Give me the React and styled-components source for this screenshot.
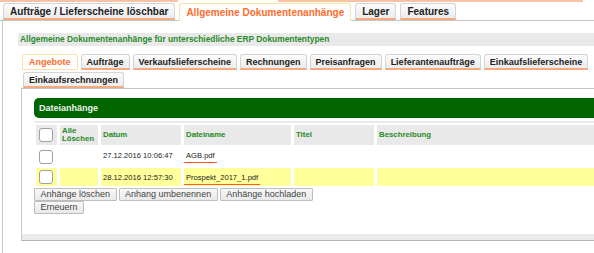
import React from 'react'
import styled, { createGlobalStyle, css } from 'styled-components'

const GlobalStyle = createGlobalStyle`
  html, body {
    margin: 0;
    padding: 0;
    background: #fff;
  }
  body {
    font-family: "Liberation Sans", Arial, sans-serif;
    width: 594px;
    height: 253px;
    overflow: hidden;
  }
`

const Page = styled.div`
  width: 594px;
  height: 253px;
  display: flex;
  flex-direction: column;
`

const CutRow = styled.div`
  display: flex;
  height: 2px;
`

const CutTab = styled.div`
  width: ${p => p.$w}px;
  margin-left: ${p => p.$ml || 0}px;
  border-bottom: 2px solid #f9c3a3;
`

const TopTabs = styled.div`
  display: flex;
  align-items: flex-end;
  gap: 4px;
  margin-top: 1px;
  padding-left: 3px;
  height: 17px;
  border-bottom: 1px solid #c4c4c4;
`

const tabBase = css`
  box-sizing: border-box;
  display: flex;
  align-items: center;
  white-space: nowrap;
  font-weight: bold;
  color: #222;
  border: 1px solid #d4d4d4;
  border-bottom: 2px solid #f5a97c;
  border-radius: 3px 3px 0 0;
  background: linear-gradient(#fcfcfc, #ececec);
`

const TopTab = styled.div`
  ${tabBase};
  height: 17px;
  padding: 0 6px;
  font-size: 10px;
  ${p => p.$active && css`
    height: 18px;
    margin-bottom: -1px;
    background: #fff;
    border-color: #fbe2a8;
    border-bottom: none;
    color: #ff6b2b;
  `}
`

const Outer = styled.div`
  flex: 1;
  margin-left: 2px;
  border-left: 1px solid #c8c8c8;
  padding: 12px 0 0 15px;
  display: flex;
  flex-direction: column;
`

const TitleBar = styled.div`
  height: 13px;
  line-height: 13px;
  background: #e9e9e9;
  color: #2a8a2a;
  font-weight: bold;
  font-size: 8.4px;
  padding-left: 2px;
  white-space: nowrap;
`

const InnerWrap = styled.div`
  margin: 8px 0 0 3px;
  width: 600px;
`

const InnerTabs = styled.div`
  display: flex;
  flex-direction: column;
  gap: 2px;
  padding-left: 1px;
  border-bottom: 1px solid #c4c4c4;
`

const TabLine = styled.div`
  display: flex;
  gap: 3px;
  padding-left: ${p => p.$pl || 0}px;
`

const InnerTab = styled.div`
  ${tabBase};
  height: 16px;
  padding: 0 5px;
  font-size: 9px;
  ${p => p.$active && css`
    padding: 0 6px;
    background: #fff;
    border-color: #fbe2a8;
    border-bottom: 1px solid #fbe2a8;
    color: #ff6b2b;
  `}
`

const Panel = styled.div`
  border-left: 1px solid #c8c8c8;
  padding: 9px 0 0 0;
  display: flex;
  flex-direction: column;
`

const PanelBody = styled.div`
  padding: 0 8px 20px 12px;
  display: flex;
  flex-direction: column;
`

const PanelFoot = styled.div`
  height: 6px;
  background: #ebebeb;
  border-bottom: 1px solid #b4b4b4;
`

const GreenHead = styled.div`
  height: 20px;
  line-height: 20px;
  background: #006400;
  border-radius: 5px;
  color: #eef3ee;
  font-weight: bold;
  font-size: 9px;
  padding-left: 5px;
`

const GreyRule = styled.div`
  height: 2px;
  margin: 3px 0 2px 1px;
  background: #e9e9e9;
`

const Grid = styled.div`
  display: grid;
  grid-template-columns: 21px 38px 80px 107px 80px 1fr;
  column-gap: 3px;
  row-gap: 1px;
  margin-left: 2px;
  font-size: 7.6px;
  color: #222;
`

const HeadCell = styled.div`
  height: 20px;
  background: #e9e9e9;
  color: #278a27;
  font-weight: bold;
  font-size: 7.8px;
  display: flex;
  align-items: center;
  padding-left: 2px;
  line-height: 8.5px;
`

const Cell = styled.div`
  height: ${p => p.$h}px;
  background: ${p => (p.$hl ? '#ffff9c' : '#fff')};
  padding: 5px 0 0 2px;
  box-sizing: border-box;
`

const CheckCell = styled.div`
  height: ${p => p.$h}px;
  background: ${p => (p.$hl ? '#ffff9c' : p.$head ? '#e9e9e9' : '#fff')};
  display: flex;
  align-items: center;
  padding-left: 3px;
`

const Box = styled.span`
  display: inline-block;
  width: 12px;
  height: 12px;
  border: 1px solid #a0a0a0;
  border-radius: 3px;
  background: #fff;
`

const FileName = styled.span`
  display: inline-block;
  padding: 0 2px 2px 2px;
  margin-left: -2px;
  border-bottom: 1px solid #ff5a22;
`

const Buttons = styled.div`
  display: flex;
  gap: 2px;
  margin-top: ${p => p.$mt || 0}px;
`

const Button = styled.button`
  font-family: "Liberation Sans", Arial, sans-serif;
  font-size: 9px;
  color: #444;
  height: 13px;
  line-height: 11px;
  padding: 0 5.5px;
  background: linear-gradient(#f8f8f8, #e9e9e9);
  border: 1px solid #bdbdbd;
  border-radius: 1px;
`

const rows = [
  { date: '27.12.2016 10:06:47', file: 'AGB.pdf', hl: false, h: 21 },
  { date: '28.12.2016 12:57:30', file: 'Prospekt_2017_1.pdf', hl: true, h: 18 },
]

const App = () => {
  return (
    <Page>
      <GlobalStyle />
      <CutRow>
        <CutTab $w={178} />
        <CutTab $w={305} $ml={100} />
      </CutRow>
      <TopTabs>
        <TopTab>Aufträge / Lieferscheine löschbar</TopTab>
        <TopTab $active>Allgemeine Dokumentenanhänge</TopTab>
        <TopTab>Lager</TopTab>
        <TopTab>Features</TopTab>
      </TopTabs>
      <Outer>
        <TitleBar>Allgemeine Dokumentenanhänge für unterschiedliche ERP Dokumententypen</TitleBar>
        <InnerWrap>
          <InnerTabs>
            <TabLine>
              <InnerTab $active>Angebote</InnerTab>
              <InnerTab>Aufträge</InnerTab>
              <InnerTab>Verkaufslieferscheine</InnerTab>
              <InnerTab>Rechnungen</InnerTab>
              <InnerTab>Preisanfragen</InnerTab>
              <InnerTab>Lieferantenaufträge</InnerTab>
              <InnerTab>Einkaufslieferscheine</InnerTab>
            </TabLine>
            <TabLine $pl={1}>
              <InnerTab>Einkaufsrechnungen</InnerTab>
            </TabLine>
          </InnerTabs>
          <Panel>
            <PanelBody>
              <GreenHead>Dateianhänge</GreenHead>
              <GreyRule />
              <Grid>
                <CheckCell $head $h={20}><Box /></CheckCell>
                <HeadCell>Alle<br />Löschen</HeadCell>
                <HeadCell>Datum</HeadCell>
                <HeadCell>Dateiname</HeadCell>
                <HeadCell>Titel</HeadCell>
                <HeadCell>Beschreibung</HeadCell>
                {rows.map(r => (
                  <React.Fragment key={r.file}>
                    <CheckCell $hl={r.hl} $h={r.h}><Box /></CheckCell>
                    <Cell $hl={r.hl} $h={r.h} />
                    <Cell $hl={r.hl} $h={r.h}>{r.date}</Cell>
                    <Cell $hl={r.hl} $h={r.h}><FileName>{r.file}</FileName></Cell>
                    <Cell $hl={r.hl} $h={r.h} />
                    <Cell $hl={r.hl} $h={r.h} />
                  </React.Fragment>
                ))}
              </Grid>
              <Buttons $mt={2}>
                <Button>Anhänge löschen</Button>
                <Button>Anhang umbenennen</Button>
                <Button>Anhänge hochladen</Button>
              </Buttons>
              <Buttons>
                <Button>Erneuern</Button>
              </Buttons>
            </PanelBody>
            <PanelFoot />
          </Panel>
        </InnerWrap>
      </Outer>
    </Page>
  )
}

export default App
